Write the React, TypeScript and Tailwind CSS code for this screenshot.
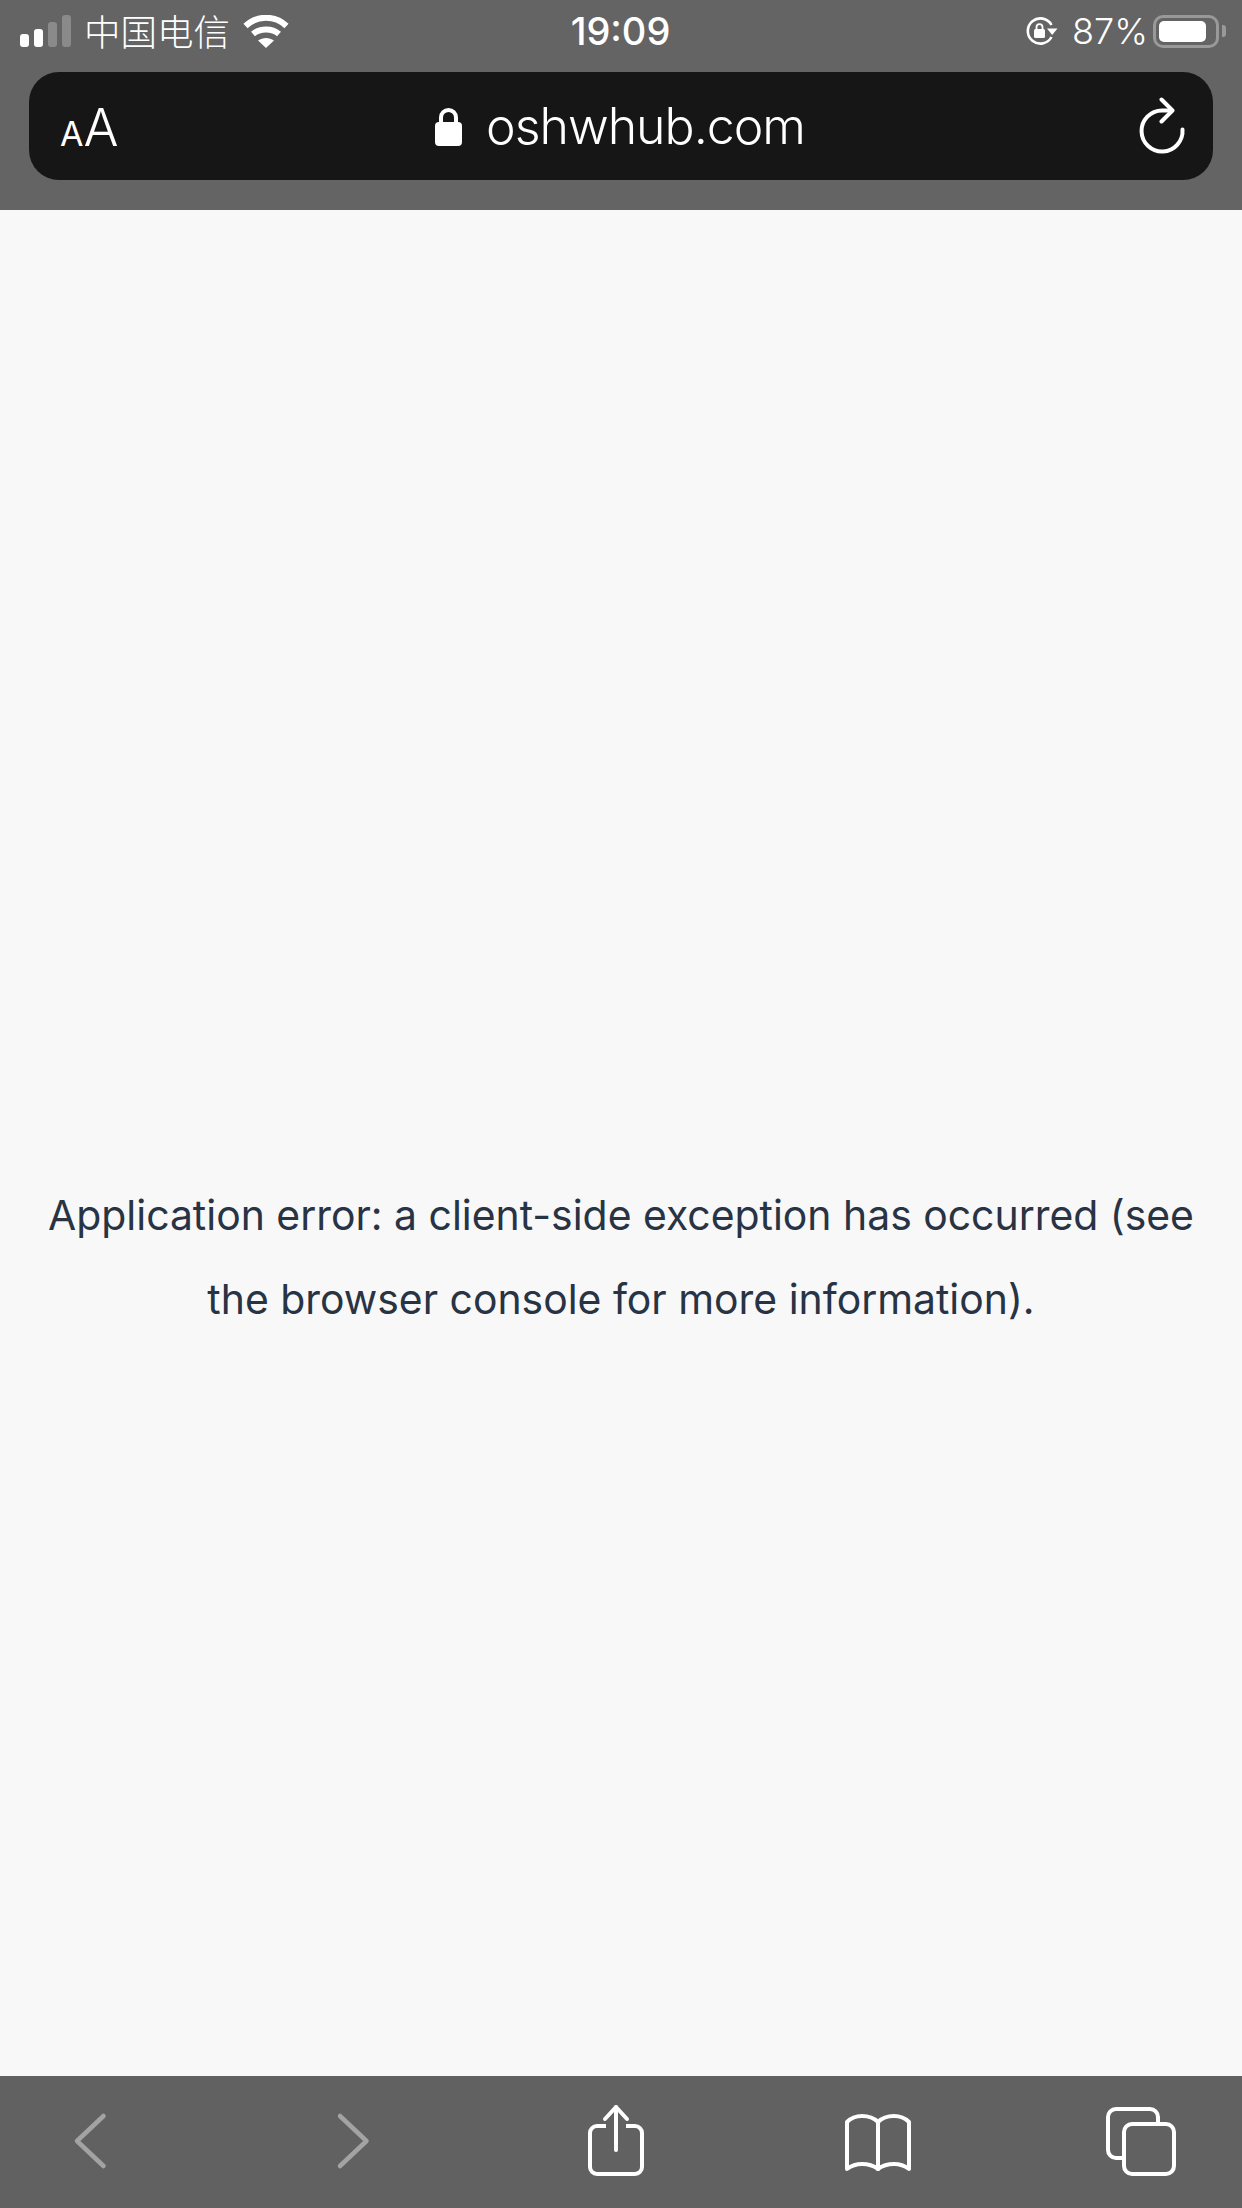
function SignalBars() {
  return (
    <div className="flex items-end gap-[5px] h-[32px]">
      <div className="w-[9px] h-[13px] rounded-[3px] bg-white"></div>
      <div className="w-[9px] h-[18px] rounded-[3px] bg-white"></div>
      <div className="w-[9px] h-[25px] rounded-[3px] bg-[#8a8a8a]"></div>
      <div className="w-[9px] h-[32px] rounded-[3px] bg-[#8a8a8a]"></div>
    </div>
  );
}

function WifiIcon() {
  return (
    <svg className="w-[46px] h-[33px]" viewBox="0 0 46 33" fill="none" stroke="#fff" strokeWidth={6}>
      <path d="M2.5 11C14 0 32 0 43.5 11" />
      <path d="M10 19C17 13 29 13 36 19" />
      <path d="M15 25.5C20 22 26 22 31 25.5L23 33Z" fill="#fff" stroke="none" />
    </svg>
  );
}

function RotationLockIcon() {
  return (
    <svg className="w-[33px] h-[30px]" viewBox="0 0 33 30" fill="none" stroke="#fff" strokeWidth={2.6}>
      <path d="M26.5 9A12.6 12.6 0 1 0 26.5 21" />
      <path d="M22 12.5H32.5L27.2 19Z" fill="#fff" stroke="none" />
      <rect x="9" y="13" width="11" height="9" rx="1.5" fill="#fff" stroke="none" />
      <path d="M11.5 14V11.2a3 3 0 0 1 6 0V14" strokeWidth={1.8} />
    </svg>
  );
}

function Battery() {
  return (
    <div className="flex items-center gap-[3px]">
      <div className="w-[66px] h-[33px] rounded-[10px] border-[3px] border-[#999999] p-[3px]">
        <div className="w-[47px] h-full rounded-[5px] bg-white"></div>
      </div>
      <div className="w-[4px] h-[12px] rounded-r-[3px] bg-[#999999]"></div>
    </div>
  );
}

function PadlockIcon() {
  return (
    <svg className="w-[27px] h-[39px]" viewBox="0 0 27 39" fill="none">
      <path d="M6 18V10.5a7.5 7.5 0 0 1 15 0V18" stroke="#fff" strokeWidth={4} />
      <rect x="0" y="15" width="27" height="24" rx="4" fill="#fff" />
    </svg>
  );
}

function ReloadIcon() {
  return (
    <svg className="w-[48px] h-[58px]" viewBox="0 0 48 58" fill="none" stroke="#fff" strokeWidth={4} strokeLinecap="round" strokeLinejoin="round">
      <path d="M44.5 32.5A20.5 20.5 0 1 1 24 13.5H33" />
      <path d="M23.5 2.5L34.5 13.5L23.5 24.5" />
    </svg>
  );
}

function BackIcon() {
  return (
    <svg className="w-[72px] h-[72px]" viewBox="0 0 72 72" fill="none" stroke="#a3a3a3" strokeWidth={4.5} strokeLinecap="round" strokeLinejoin="round">
      <path d="M49.5 12L23 37L49.5 62" />
    </svg>
  );
}

function ForwardIcon() {
  return (
    <svg className="w-[72px] h-[72px]" viewBox="0 0 72 72" fill="none" stroke="#a3a3a3" strokeWidth={4.5} strokeLinecap="round" strokeLinejoin="round">
      <path d="M23 12L49.5 37L23 62" />
    </svg>
  );
}

function ShareIcon() {
  return (
    <svg className="w-[72px] h-[72px]" viewBox="0 0 72 72" fill="none" stroke="#fff" strokeWidth={4} strokeLinecap="round" strokeLinejoin="round">
      <path d="M36 46V3" />
      <path d="M25 15L36 3L47 15" />
      <path d="M26 22H17a7 7 0 0 0 -7 7V63a7 7 0 0 0 7 7H55a7 7 0 0 0 7 -7V29a7 7 0 0 0 -7 -7H46" strokeLinecap="butt" />
    </svg>
  );
}

function BookIcon() {
  return (
    <svg className="w-[72px] h-[72px]" viewBox="0 0 72 72" fill="none" stroke="#fff" strokeWidth={4} strokeLinecap="round" strokeLinejoin="round">
      <path d="M36 18V65" />
      <path d="M36 18C32 14 26 12 20 12C14 12 9 14 5 18V65C9 62 14 60 20 60C26 60 32 62 36 65" />
      <path d="M36 18C40 14 46 12 52 12C58 12 63 14 67 18V65C63 62 58 60 52 60C46 60 40 62 36 65" />
    </svg>
  );
}

function TabsIcon() {
  return (
    <svg className="w-[72px] h-[72px]" viewBox="0 0 72 72" fill="none" stroke="#fff" strokeWidth={4}>
      <path d="M19 54H11a8 8 0 0 1 -8 -8V13a8 8 0 0 1 8 -8H45a8 8 0 0 1 8 8V20" />
      <rect x="19" y="20" width="50" height="50" rx="8" />
    </svg>
  );
}

export default function App() {
  return (
    <div className="flex flex-col h-[2208px] bg-[#f8f8f8] font-['Inter',sans-serif]">
      <header className="bg-[#646464] h-[210px] shrink-0">
        <div className="grid grid-cols-3 items-center h-[72px] pl-[15px] pr-[16px] pb-[12px] pt-[2px] text-white">
          <div className="flex items-center pl-[5px]">
            <SignalBars />
            <span className="ml-[13px] text-[36.5px] leading-none font-light font-['Noto_Sans_CJK_SC',sans-serif]">中国电信</span>
            <span className="ml-[13px] flex"><WifiIcon /></span>
          </div>
          <div className="text-center text-[38px] leading-none font-medium">19:09</div>
          <div className="flex items-center justify-end">
            <RotationLockIcon />
            <span className="ml-[14px] mr-[5px] text-[36px] leading-none font-light">87%</span>
            <Battery />
          </div>
        </div>
        <div className="mx-[29px] h-[108px] rounded-[30px] bg-[#161616] grid grid-cols-[1fr_auto_1fr] items-center pl-[31px] pr-[27px] text-white">
          <div className="flex items-baseline pt-[3px]">
            <span className="text-[34px] leading-none">A</span>
            <span className="text-[52px] leading-none font-light">A</span>
          </div>
          <div className="flex items-center gap-[24px] mr-[6px]">
            <PadlockIcon />
            <span className="text-[50px] leading-none font-[350] tracking-[-1px]">oshwhub.com</span>
          </div>
          <div className="flex justify-end"><ReloadIcon /></div>
        </div>
      </header>
      <main className="flex-1 flex items-center justify-center pt-[227px] px-[40px]">
        <p className="text-center text-[40.9px] leading-[84px] text-[#283344]">
          Application error: a client-side exception has occurred (see the browser console for more information).
        </p>
      </main>
      <footer className="bg-[#616161] h-[132px] shrink-0 flex items-start justify-between pt-[28px] pl-[54px] pr-[65px]">
        <BackIcon />
        <ForwardIcon />
        <ShareIcon />
        <BookIcon />
        <TabsIcon />
      </footer>
    </div>
  );
}
